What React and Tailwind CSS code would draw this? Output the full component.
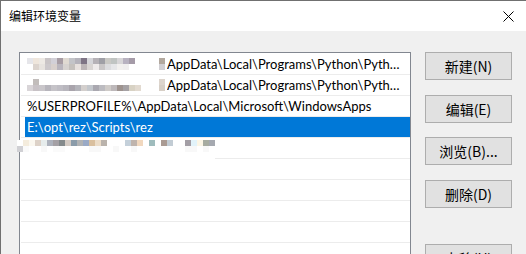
import React from 'react';

const LIST_FONT = { fontFamily: '"Segoe UI", Lato, "Noto Sans CJK SC", sans-serif' };

// pixelated (blurred) parts of the paths, drawn as blocks
const MOSAIC_A = [
  ['#e6e6ea', '#efe6dc', '#ede9e4', '#c9c4c6', '#d2d0d7', '#a89da4', '#e0dad2', '#c3c4c8', '#b5b3bb', '#7e7485', '#d6d6da', '#b6b2b7', '#9f9fa6', '#cac9c5', '#c0c4c2', '#d8d6d8', '#b8b2c0', '#a59ba8', '#fff', '#fff', '#fff', '#fff', '#b2a89e'],
  ['#fff', '#dcd4ce', '#e7e3df', '#ccc8cb', '#d8d0cc', '#b9b5bd', '#d7d3d0', '#c5c1bd', '#e7e1de', '#bcb5b7', '#d9d5d3', '#efebeb', '#c9c6c7', '#dcdcdf', '#e6e6e8', '#f2f0ee', '#f0eeee', '#fff', '#fff', '#fff', '#fff', '#fff', '#d1cfd3'],
];
const MOSAIC_B = [
  ['#fff', '#c2bdbb', '#fff', '#fff', '#fff', '#fff', '#fff', '#fff', '#fff', '#fff', '#fff', '#fff', '#fff', '#fff', '#fff', '#fff', '#fff', '#fff', '#fff', '#fff', '#fff', '#fff', '#ddd5cd'],
  ['#d9d5d8', '#c8c2c6', '#c9c6ca', '#b7b5bc', '#c5c3c8', '#bfbdc4', '#b8b6bd', '#a9a4ac', '#b4b4ba', '#d3cfcd', '#c3c7cc', '#aaa8b0', '#bcbbc0', '#cfcbc8', '#bdb8ba', '#9e938f', '#a6a2a5', '#d8d2c4', '#e2dad0', '#fff', '#fff', '#fff', '#d7cfc6'],
];
const MOSAIC_C = [
  ['#fff', '#f4ecdd', '#fbf8f0', '#ddd2c8', '#e6ecec', '#adb2bd', '#a4a0a5', '#848a8c', '#d3cac3', '#8b9caa', '#b1b3b4', '#9aaac6', '#d9bf9e', '#ebdcc8', '#bab3ac', '#fff', '#fff', '#fff', '#c4d0da', '#bfb4ad', '#f1d8bf', '#fff', '#9fbcbd', '#fff', '#aa9b93', '#c2ccd4', '#fff', '#fff', '#a39ea5', '#e2f3fa', '#fcf6e6', '#a7aca1', '#a5a9b0'],
  ['#d0d0d4', '#fafafa', '#fff', '#fff', '#f8f8f8', '#fff', '#fafafa', '#fafafa', '#fff', '#fff', '#fff', '#fff', '#f8f8f8', '#f8f8f8', '#fff', '#fff', '#f8f8f8', '#fff', '#fff', '#f8f8f8', '#fff', '#fff', '#fff', '#fff', '#fff', '#fff', '#fff', '#fff', '#f8f8f8', '#f8f8f8', '#fff', '#f8f8f8', '#fff'],
];

function Mosaic({ rows, size = 6 }) {
  return (
    <div className="flex shrink-0 flex-col">
      {rows.map((row, r) => (
        <div key={r} className="flex">
          {row.map((c, i) => (
            <div key={i} style={{ width: size, height: size, background: c }} />
          ))}
        </div>
      ))}
    </div>
  );
}

function Row({ children, selected, className = '' }) {
  return (
    <div className="ml-[1px] h-[21px] border-b border-[#ececec]">
      <div
        className={`flex h-[20px] items-center overflow-hidden whitespace-nowrap text-[13px] leading-none ${
          selected ? 'ml-[4px] bg-[#0078d7] pl-[2px] text-white' : 'pl-[6px] text-black'
        } ${className}`}
        style={LIST_FONT}
      >
        {children}
      </div>
    </div>
  );
}

function Btn({ label, className = '' }) {
  return (
    <div
      className={`flex h-[28px] w-[87px] items-center justify-center border border-[#adadad] bg-[#e1e1e1] text-[14px] text-black ${className}`}
      style={{ fontFamily: '"Microsoft YaHei", "Noto Sans CJK SC", sans-serif' }}
    >
      {label}
    </div>
  );
}

export default function App() {
  return (
    <div className="relative h-[254px] w-[526px] overflow-hidden border-l border-t border-[#707070] bg-[#f0f0f0]">
      {/* title bar */}
      <div className="flex h-[30px] items-center bg-white pl-[8px]">
        <span
          className="text-[12px] text-black"
          style={{ fontFamily: '"Microsoft YaHei", "Noto Sans CJK SC", sans-serif' }}
        >
          编辑环境变量
        </span>
        <svg className="ml-auto mr-[12px]" width="11" height="11" viewBox="0 0 11 11">
          <path d="M0.5 0.5 L10.5 10.5 M10.5 0.5 L0.5 10.5" stroke="#000" strokeWidth="1" fill="none" />
        </svg>
      </div>

      <div className="flex pt-[21px]">
        {/* path list */}
        <div className="ml-[18px] h-[260px] w-[392px] border border-[#828790] bg-white pt-[1px]">
          <Row>
            <div className="mr-[2px] flex items-center">
              <Mosaic rows={MOSAIC_A} />
            </div>
            <span className="mr-[5px] truncate">AppData\Local\Programs\Python\Python310\Scripts\</span>
          </Row>
          <Row>
            <div className="mr-[2px] flex items-center">
              <Mosaic rows={MOSAIC_B} />
            </div>
            <span className="mr-[5px] truncate">AppData\Local\Programs\Python\Python310\</span>
          </Row>
          <Row>%USERPROFILE%\AppData\Local\Microsoft\WindowsApps</Row>
          <Row selected>E:\opt\rez\Scripts\rez</Row>
          <div className="relative h-[21px]">
            <div className="absolute left-[-3px] top-[2px]">
              <Mosaic rows={MOSAIC_C} />
            </div>
            <div className="absolute bottom-0 left-[195px] right-0 h-px bg-[#ececec]" />
          </div>
          <Row />
          <Row />
          <Row />
          <Row />
          <Row />
        </div>

        {/* buttons */}
        <div className="ml-[14px] flex flex-col">
          <Btn label="新建(N)" />
          <Btn label="编辑(E)" className="mt-[15px]" />
          <Btn label="浏览(B)..." className="mt-[14px]" />
          <Btn label="删除(D)" className="mt-[15px]" />
          <Btn label="上移(U)" className="mt-[36px]" />
        </div>
      </div>
    </div>
  );
}
